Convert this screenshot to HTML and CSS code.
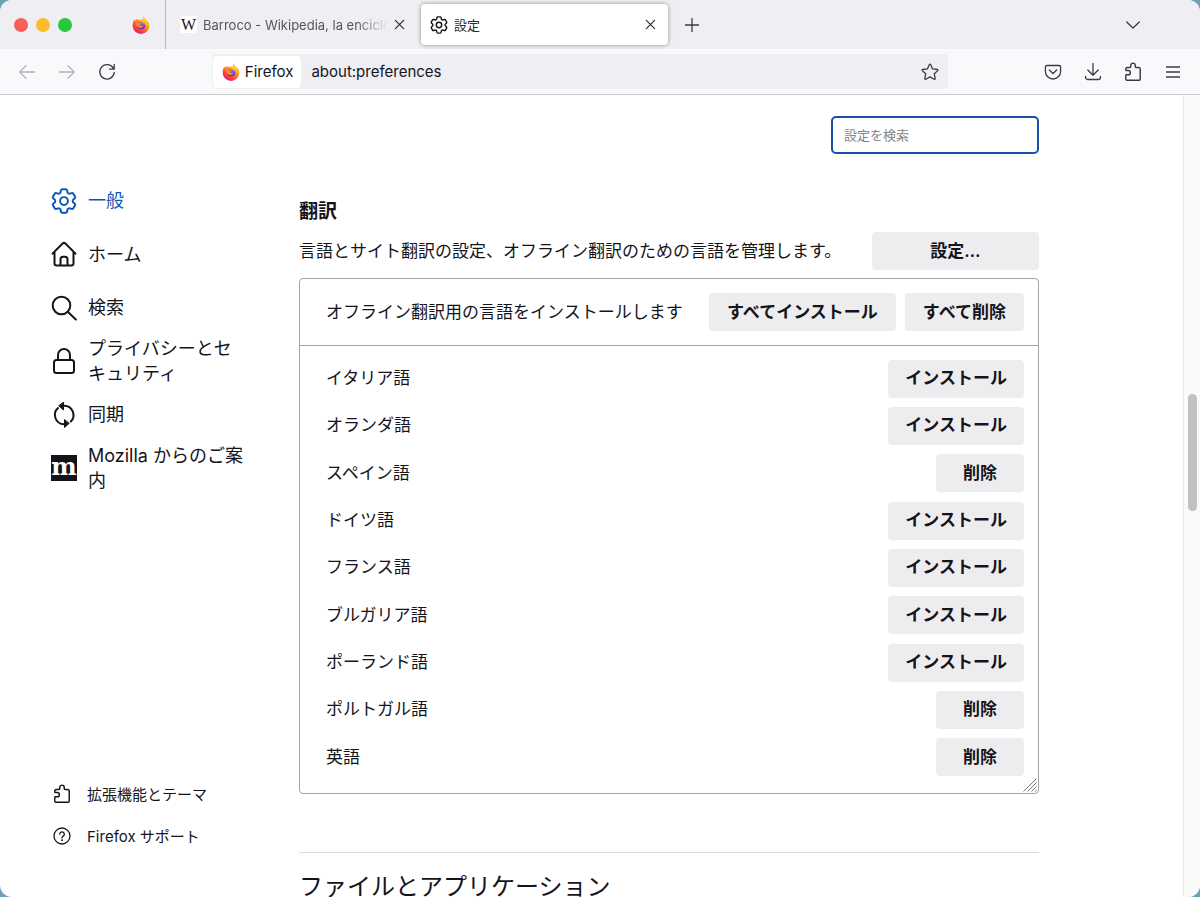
FILE: index.html
```html
<!DOCTYPE html>
<html lang="ja">
<head>
<meta charset="utf-8">
<meta name="viewport" content="width=device-width, initial-scale=1">
<title>設定</title>
<link rel="stylesheet" href="styles.css">
</head>
<body>
<svg class="defs" aria-hidden="true">
  <defs>
    <linearGradient id="flame" x1="0.8" y1="0.1" x2="0.25" y2="0.95">
      <stop offset="0" stop-color="#ffe03a"/>
      <stop offset="0.35" stop-color="#ff9a1f"/>
      <stop offset="0.7" stop-color="#ff4a3d"/>
      <stop offset="1" stop-color="#e31c6b"/>
    </linearGradient>
    <radialGradient id="globe" cx="0.55" cy="0.35" r="0.7">
      <stop offset="0" stop-color="#a45bf2"/>
      <stop offset="1" stop-color="#4b2fa3"/>
    </radialGradient>
    <symbol id="i-firefox" viewBox="0 0 20 20">
      <path fill="url(#flame)" d="M2.6 4.2c.3.5.5.8.9 1.1C4.300 4 5.500 3.400 6.600 3.300 6.400 3.900 6.700 4.300 7.100 4.500 8.600 3.800 10.600 3.600 12 4.300 11.500 3 11.900 1.500 13 .4c.4 1.700 1.600 2.600 2.700 3.700.6.600 1 1.100 1.300 1.700l.3-.9c1.400 1.800 2 3.700 2 5.700A9.300 9.300 0 0 1 .7 10.600C.6 8.200 1.300 6 2.600 4.200z"/>
      <circle cx="10.400" cy="10.400" r="4.400" fill="url(#globe)"/>
      <path fill="#ff8a1c" d="M4.300 7.200c1.300-.9 2.800-.8 3.900.1 1 .1 2.100.1 2.500.5-.1.900-1.600 1.100-1.800 1.700.2 1.700 2.200 2.200 4.100 1.400-.8 2.200-3 2.800-4.900 2.100-2.600-.9-3.900-3-3.800-5.800z"/>
      <path fill="#ffc52e" d="M12 4.300c2.600.9 4.600 3.200 4.300 6.500-.7-1.900-1.700-3.100-3-3.700.5 1.100.8 2.100.7 3.100-.8-2.100-2.300-3.900-5.300-4.200C9.600 5 10.700 4.400 12 4.300z"/>
    </symbol>
    <symbol id="i-gear" viewBox="2 2 20 20">
      <path d="M9.594 3.940c.09-.542.56-.94 1.110-.94h2.593c.55 0 1.020.398 1.110.94l.213 1.281c.063.374.313.686.645.87.074.04.147.083.22.127.325.196.72.257 1.075.124l1.217-.456a1.125 1.125 0 0 1 1.370.49l1.296 2.247a1.125 1.125 0 0 1-.26 1.431l-1.003.827c-.293.241-.438.613-.43.992a7.723 7.723 0 0 1 0 .255c-.008.378.137.75.43.991l1.004.827c.424.35.534.955.26 1.430l-1.298 2.247a1.125 1.125 0 0 1-1.369.491l-1.217-.456c-.355-.133-.75-.072-1.076.124a6.470 6.470 0 0 1-.22.128c-.331.183-.581.495-.644.869l-.213 1.281c-.09.543-.56.94-1.110.94h-2.594c-.55 0-1.019-.398-1.110-.94l-.213-1.281c-.062-.374-.312-.686-.644-.87a6.520 6.520 0 0 1-.22-.127c-.325-.196-.72-.257-1.076-.124l-1.217.456a1.125 1.125 0 0 1-1.369-.49l-1.297-2.247a1.125 1.125 0 0 1 .26-1.431l1.004-.827c.292-.24.437-.613.43-.991a6.932 6.932 0 0 1 0-.255c.007-.38-.138-.751-.43-.992l-1.004-.827a1.125 1.125 0 0 1-.26-1.430l1.297-2.247a1.125 1.125 0 0 1 1.370-.491l1.216.456c.356.133.751.072 1.076-.124.072-.044.146-.086.22-.128.332-.183.582-.495.644-.869l.214-1.280Z"/>
      <circle cx="12" cy="12" r="3"/>
    </symbol>
    <symbol id="i-puzzle" viewBox="0 0 18 18">
      <path d="M2.500 7.500V6.200a1.300 1.300 0 0 1 1.300-1.300h2.400c.5 0 .8-.3.8-.8V3a2 2 0 0 1 4 0v1.100c0 .5.300.8.800.8h2.400a1.300 1.300 0 0 1 1.300 1.300v9a1.300 1.300 0 0 1-1.300 1.300H3.800a1.300 1.300 0 0 1-1.300-1.300v-3.100c0-.4.200-.6.600-.6h1.600a1.900 1.900 0 0 0 0-3.800H3.100c-.4 0-.6-.1-.6-.4z"/>
    </symbol>
    <symbol id="i-close" viewBox="0 0 12 12"><path d="M1.500 1.500l9 9M10.500 1.500l-9 9"/></symbol>
  </defs>
</svg>

<div class="window">
  <header class="tabstrip">
    <div class="lights" aria-hidden="true"><span class="light red"></span><span class="light yellow"></span><span class="light green"></span></div>
    <button class="pinned" aria-label="Firefox"><svg class="logo"><use href="#i-firefox"/></svg></button>
    <div class="tab">
      <span class="favicon" aria-hidden="true">W</span>
      <span class="tab-title fade">Barroco - Wikipedia, la enciclopedia libre</span>
      <button class="close" aria-label="タブを閉じる"><svg class="icon x"><use href="#i-close"/></svg></button>
    </div>
    <div class="tab active">
      <svg class="icon tab-gear"><use href="#i-gear"/></svg>
      <span class="tab-title">設定</span>
      <button class="close" aria-label="タブを閉じる"><svg class="icon x"><use href="#i-close"/></svg></button>
    </div>
    <button class="tool new-tab" aria-label="新しいタブ"><svg class="icon i14" viewBox="0 0 14 14"><path d="M7 .5v13M.5 7h13"/></svg></button>
    <button class="tool all-tabs" aria-label="タブの一覧"><svg class="icon i14" viewBox="0 0 14 14"><path d="M.7 4l6.300 6 6.300-6"/></svg></button>
  </header>

  <div class="toolbar">
    <div class="tools">
      <button class="tool" aria-label="戻る" disabled><svg class="icon i16" viewBox="0 0 16 16"><path d="M15.500 8H.8M7 1.700L.7 8 7 14.300"/></svg></button>
      <button class="tool" aria-label="進む" disabled><svg class="icon i16" viewBox="0 0 16 16"><path d="M.5 8h14.700M9 1.700L15.300 8 9 14.300"/></svg></button>
      <button class="tool" aria-label="再読み込み"><svg class="icon i18" viewBox="0 0 18 18"><path d="M15.400 5.500A7.200 7.200 0 1 0 16.200 9.500M16.200 1.500v4.700h-4.700"/></svg></button>
    </div>
    <span class="spring"></span>
    <div class="urlbar">
      <button class="identity"><svg class="logo"><use href="#i-firefox"/></svg>Firefox</button>
      <input class="url" type="text" aria-label="アドレス" value="about:preferences">
      <button class="star" aria-label="ブックマーク"><svg class="icon i18" viewBox="0 0 18 18"><path d="M9 1.200c.3 0 .5.200.6.400l2 4.300 4.700.6c.6.100.8.700.4 1.100l-3.400 3.200.9 4.700c.1.600-.5.900-1 .7L9 13.900l-4.200 2.300c-.5.200-1.100-.1-1-.7l.9-4.700L1.300 7.600c-.4-.4-.2-1 .4-1.100l4.700-.6 2-4.300c.1-.2.3-.4.600-.4z"/></svg></button>
    </div>
    <span class="spring"></span>
    <div class="tools">
      <button class="tool" aria-label="Pocket"><svg class="icon i18" viewBox="0 0 18 18"><path d="M3 2.500h12a1.600 1.600 0 0 1 1.600 1.600v4.300a7.600 7.600 0 0 1-15.200 0V4.100A1.600 1.600 0 0 1 3 2.500zM5.300 7L9 10.500 12.700 7"/></svg></button>
      <button class="tool" aria-label="ダウンロード"><svg class="icon i18" viewBox="0 0 18 18"><path d="M9 .5v11.500M3.800 7L9 12.200 14.200 7M1.600 13.300v1.200a2 2 0 0 0 2 2h10.800a2 2 0 0 0 2-2v-1.200"/></svg></button>
      <button class="tool" aria-label="拡張機能"><svg class="icon i20"><use href="#i-puzzle"/></svg></button>
      <button class="tool" aria-label="メニュー"><svg class="icon i14" viewBox="0 0 14 14"><path d="M.3 2h13.400M.3 7h13.400M.3 12h13.400"/></svg></button>
    </div>
  </div>

  <div class="page">
    <aside class="sidebar">
      <nav class="categories">
        <a class="category selected" href="#general"><svg class="icon big"><use href="#i-gear"/></svg><span>一般</span></a>
        <a class="category" href="#home"><svg class="icon big" viewBox="0 0 26 26"><path d="M1.500 12.600L11.600 2.500a2 2 0 0 1 2.800 0l10.100 10.100M3.500 10.800v11.400a2.200 2.200 0 0 0 2.200 2.200h14.600a2.200 2.200 0 0 0 2.200-2.200V10.800M9.500 24.300v-6a2.500 2.500 0 0 1 2.500-2.500h2a2.500 2.500 0 0 1 2.500 2.500v6"/></svg><span>ホーム</span></a>
        <a class="category" href="#search"><svg class="icon big" viewBox="0 0 26 26"><circle cx="10.500" cy="10.500" r="8.800"/><path d="M16.800 16.800l8 7.700"/></svg><span>検索</span></a>
        <a class="category" href="#privacy"><svg class="icon big" viewBox="0 0 26 26"><rect x="3" y="12" width="20" height="13" rx="2.500"/><path d="M7 12V7a6 6 0 0 1 12 0v5"/></svg><span>プライバシーとセキュリティ</span></a>
        <a class="category" href="#sync"><svg class="icon big" viewBox="0 0 26 26"><path d="M7 6.100A9.300 9.300 0 0 0 13 22.300M12.500 3.700h.5a9.300 9.300 0 0 1 6.800 15.800"/><path class="solid" d="M12.500.5v7.500L8 4zM13.500 18v7.500l4.500-4z"/></svg><span>同期</span></a>
        <a class="category" href="#more"><span class="mozilla" aria-hidden="true">m</span><span>Mozilla からのご案内</span></a>
      </nav>
      <nav class="links">
        <a class="link" href="#addons"><svg class="icon i20"><use href="#i-puzzle"/></svg><span>拡張機能とテーマ</span></a>
        <a class="link" href="#support"><svg class="icon i20" viewBox="0 0 20 20"><circle cx="10" cy="10" r="8"/><path d="M7.700 8.200a2.300 2.300 0 1 1 3.700 1.800c-.8.600-1.400 1-1.400 2"/><circle class="solid dot" cx="10" cy="14.200" r=".9"/></svg><span>Firefox サポート</span></a>
      </nav>
    </aside>

    <main class="content">
      <input class="search" type="search" placeholder="設定を検索" aria-label="設定を検索">
      <section>
        <h2 class="group-title">翻訳</h2>
        <div class="description">
          <p>言語とサイト翻訳の設定、オフライン翻訳のための言語を管理します。</p>
          <button class="button wide">設定…</button>
        </div>
        <div class="languages">
          <div class="languages-head">
            <span class="grow">オフライン翻訳用の言語をインストールします</span>
            <button class="button">すべてインストール</button>
            <button class="button">すべて削除</button>
          </div>
          <ul class="rows">
            <li class="row"><span>イタリア語</span><button class="button">インストール</button></li>
            <li class="row"><span>オランダ語</span><button class="button">インストール</button></li>
            <li class="row"><span>スペイン語</span><button class="button">削除</button></li>
            <li class="row"><span>ドイツ語</span><button class="button">インストール</button></li>
            <li class="row"><span>フランス語</span><button class="button">インストール</button></li>
            <li class="row"><span>ブルガリア語</span><button class="button">インストール</button></li>
            <li class="row"><span>ポーランド語</span><button class="button">インストール</button></li>
            <li class="row"><span>ポルトガル語</span><button class="button">削除</button></li>
            <li class="row"><span>英語</span><button class="button">削除</button></li>
          </ul>
          <svg class="grip" viewBox="0 0 14 14" aria-hidden="true"><path d="M.5 13.500l13-13M4.500 13.500l9-9M8.500 13.500l5-5M12 13.500l1.500-1.500"/></svg>
        </div>
      </section>
      <h1 class="section-title">ファイルとアプリケーション</h1>
    </main>

    <div class="scrollbar" aria-hidden="true"><div class="thumb"></div></div>
  </div>
</div>
</body>
</html>
```

FILE: styles.css
```css
* {
  box-sizing: border-box;
}

body {
  margin: 0;
  background: #6f9fb3;
  color: #15141a;
  font-family: Inter, "Noto Sans CJK JP", sans-serif;
  font-size: 17px;
  line-height: 25px;
}

button,
input {
  margin: 0;
  padding: 0;
  border: 0;
  background: none;
  color: inherit;
  font: inherit;
}

a {
  color: inherit;
  text-decoration: none;
}

.defs {
  position: absolute;
  width: 0;
  height: 0;
}

.window {
  display: flex;
  flex-direction: column;
  height: 100vh;
  border-radius: 12px;
  overflow: hidden;
  background: #fff;
}

/* Icons */

.icon {
  flex: none;
  fill: none;
  stroke: currentColor;
  stroke-width: 1.3;
  stroke-linecap: round;
  stroke-linejoin: round;
}

.i14 { width: 14px; height: 14px; }
.i16 { width: 16px; height: 16px; }
.i18 { width: 18px; height: 18px; }
.i20 { width: 20px; height: 20px; }

.x {
  width: 11px;
  height: 11px;
}

.big {
  width: 26px;
  height: 26px;
  stroke-width: 2;
}

.selected .big {
  stroke-width: 1.5;
}

.solid {
  fill: currentColor;
  stroke-width: 1;
}

.dot {
  stroke: none;
}

.logo {
  flex: none;
  width: 18px;
  height: 18px;
}

/* Tab strip */

.tabstrip {
  display: flex;
  flex: none;
  align-items: center;
  height: 49px;
  background: #efeef2;
}

.lights {
  display: flex;
  gap: 8px;
  padding: 0 52px 0 14px;
}

.light {
  width: 14px;
  height: 14px;
  border-radius: 50%;
}

.red { background: #f95f57; }
.yellow { background: #fcbb2e; }
.green { background: #27c840; }

.pinned {
  display: flex;
  align-items: center;
  justify-content: center;
  width: 42px;
  height: 100%;
  padding-right: 8px;
  border-right: 1px solid #b9b9be;
}

.tab {
  display: flex;
  flex: 0 1 247px;
  align-items: center;
  gap: 6px;
  min-width: 0;
  height: 41px;
  margin-right: 4px;
  padding: 0 12px 0 10px;
  border-radius: 4px;
  color: #55545c;
  font-size: 13px;
  line-height: 20px;
}

.tab:not(.active) {
  margin-left: 4px;
}

.tab.active {
  padding-left: 9px;
  background: #fff;
  box-shadow: 0 0 4px rgba(0, 0, 0, 0.4);
  color: #2b2a33;
}

.tab-gear {
  width: 18px;
  height: 18px;
  stroke: #15141a;
  stroke-width: 1.6;
}

.favicon {
  flex: none;
  width: 17px;
  height: 17px;
  border-radius: 2px;
  background: #fff;
  color: #15141a;
  font: 16px/17px "Liberation Serif", serif;
  text-align: center;
}

.tab-title {
  flex: 1;
  min-width: 0;
  overflow: hidden;
  white-space: nowrap;
}

.fade {
  mask-image: linear-gradient(to left, transparent, #000 32px);
}

.close {
  display: flex;
  align-items: center;
  color: #2b2a33;
}

.tool {
  display: flex;
  align-items: center;
  justify-content: center;
  width: 40px;
  height: 36px;
  color: #3c3b44;
}

.tool:disabled {
  color: #b3b2b8;
}

.all-tabs {
  margin: 0 47px 0 auto;
}

/* Toolbar */

.toolbar {
  display: flex;
  flex: none;
  align-items: center;
  height: 46px;
  padding: 0 7px;
  border-bottom: 1px solid #cacace;
  background: #f9f9fb;
}

.tools {
  display: flex;
}

.spring {
  flex: 85;
}

.urlbar {
  display: flex;
  flex: 736;
  align-items: center;
  height: 35px;
  padding: 1px;
  border-radius: 4px;
  background: #efeef2;
  font-size: 15px;
}

.identity {
  display: flex;
  align-items: center;
  gap: 5px;
  height: 32px;
  padding: 0 8px 0 9px;
  border-radius: 4px;
  background: #fff;
}

.url {
  flex: 1;
  min-width: 0;
  padding-left: 10px;
  outline: 0;
}

.star {
  display: flex;
  padding: 8px;
  color: #3c3b44;
}

/* Preferences page */

.page {
  display: flex;
  flex: 1;
  min-height: 0;
}

.sidebar {
  display: flex;
  flex: none;
  flex-direction: column;
  justify-content: space-between;
  width: 299px;
  padding: 79px 50px 40px 51px;
}

.categories {
  display: grid;
  grid-auto-rows: 1fr;
  height: 321px;
  font-size: 18px;
}

.category {
  display: flex;
  align-items: center;
  gap: 11px;
  width: 198px;
}

.selected {
  color: #0b57b8;
}

.mozilla {
  flex: none;
  width: 26px;
  height: 26px;
  background: #15141a;
  color: #fff;
  font: bold 24px/23px "DejaVu Serif", serif;
  text-align: center;
}

.links {
  padding-left: 1px;
  font-size: 15px;
}

.link {
  display: flex;
  align-items: center;
  gap: 15px;
  height: 42px;
}

.content {
  display: flex;
  flex: 0 1 740px;
  flex-direction: column;
  min-width: 0;
  padding-top: 21px;
  overflow: hidden;
}

.search {
  flex: none;
  align-self: flex-end;
  width: 208px;
  height: 38px;
  padding: 0 11px;
  border: 2px solid #1b50a8;
  border-radius: 5px;
  outline: 0;
  background: #fff;
  font-size: 13px;
}

.search::placeholder {
  color: #85848b;
}

.group-title {
  margin: 45px 0 8px;
  font-size: 19px;
  font-weight: 600;
}

.description {
  display: flex;
  align-items: center;
  justify-content: space-between;
  margin-bottom: 8px;
}

.description p {
  margin: 0;
}

.button {
  flex: none;
  min-width: 88px;
  height: 38px;
  padding: 0 17px;
  border-radius: 4px;
  background: #ededf0;
  font-weight: 600;
}

.wide {
  min-width: 167px;
}

.languages {
  position: relative;
  display: flex;
  flex-direction: column;
  height: 516px;
  border: 1px solid #a3a3a8;
  border-radius: 4px;
}

.languages-head {
  display: flex;
  align-items: center;
  gap: 9px;
  padding: 14px 14px 14px 26px;
  border-bottom: 1px solid #a3a3a8;
}

.languages-head .button {
  padding: 0 18px;
}

.grow {
  flex: 1;
}

.rows {
  display: grid;
  flex: 1;
  grid-auto-rows: 1fr;
  margin: 0;
  padding: 9px 14px 12px 26px;
  list-style: none;
}

.row {
  display: flex;
  align-items: center;
  justify-content: space-between;
}

.grip {
  position: absolute;
  right: 1px;
  bottom: 1px;
  width: 14px;
  height: 14px;
  fill: none;
  stroke: #77767c;
}

.section-title {
  margin: 58px 0 0;
  padding-top: 16px;
  border-top: 1px solid #dcdcdf;
  font-size: 24px;
  font-weight: 400;
  line-height: 36px;
}

.scrollbar {
  width: 17px;
  margin-left: auto;
  padding: 299px 3px 0 4px;
  border-left: 1px solid #e9e9e9;
  background: #fafafa;
}

.thumb {
  height: 117px;
  border-radius: 5px;
  background: #c1c1c1;
}
```
